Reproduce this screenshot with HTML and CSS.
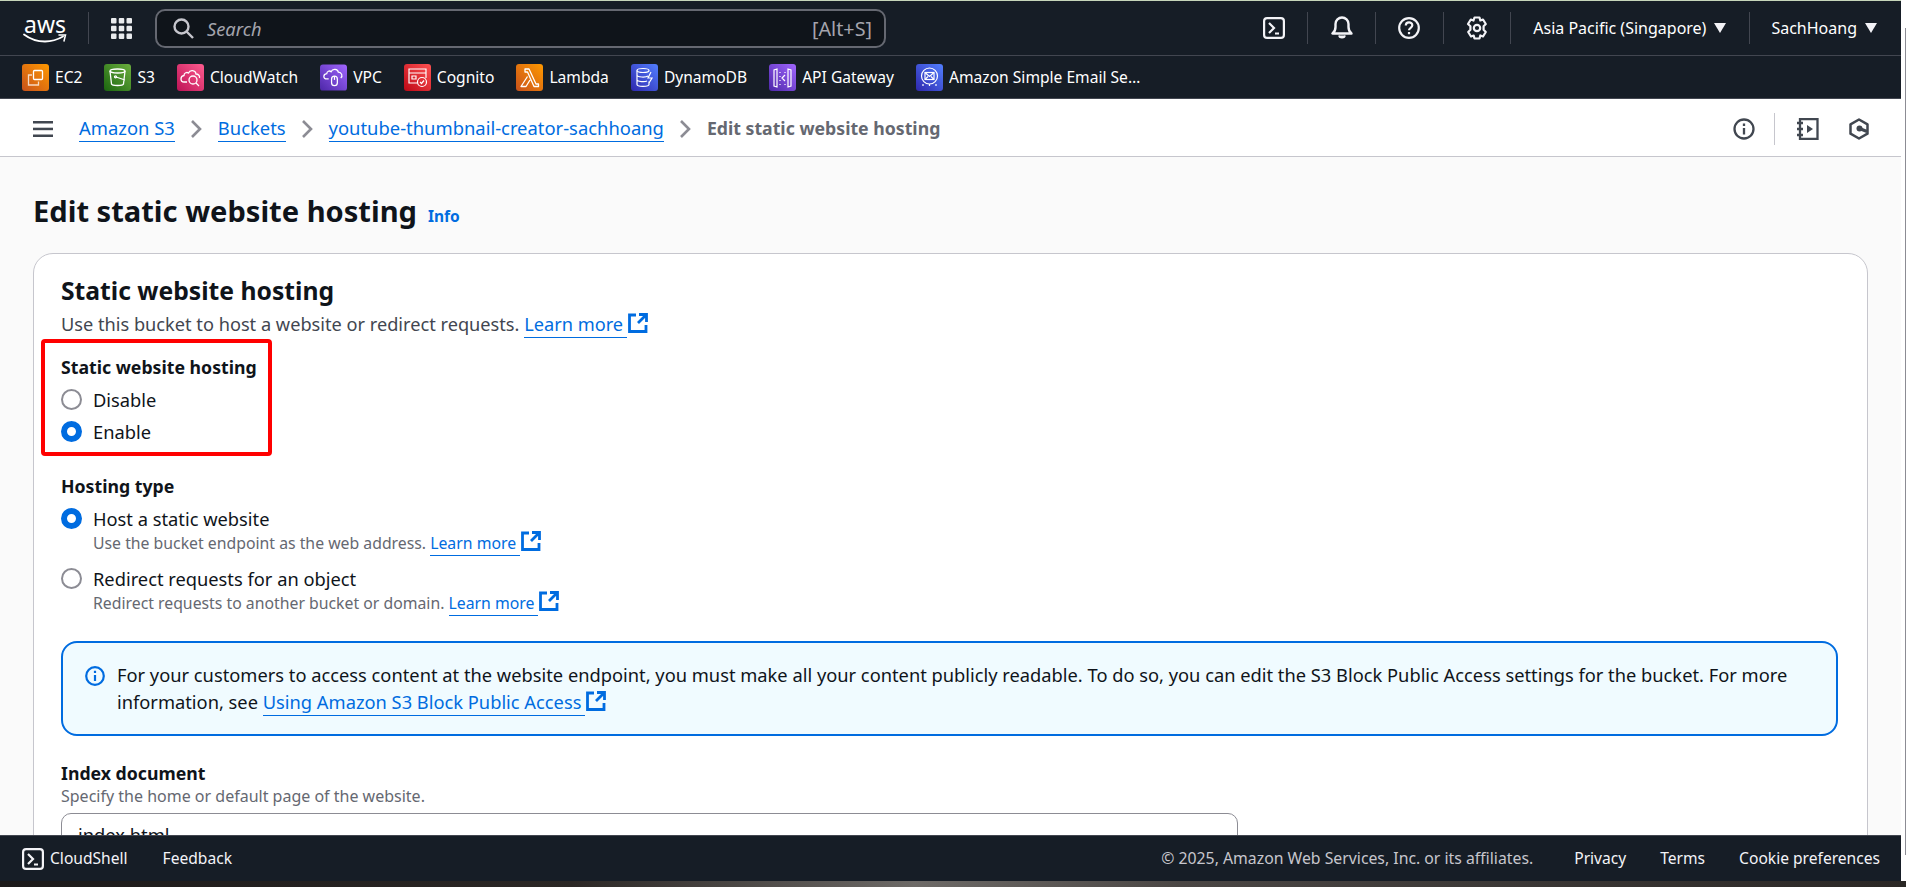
FILE: index.html
```html
<!DOCTYPE html>
<html lang="en">
<head>
  <meta charset="UTF-8" />
  <meta name="viewport" content="width=device-width, initial-scale=1.0"/>
  <title>Edit static website hosting</title>
  <link rel="stylesheet" href="styles.css">
</head>
<body>

  <div class="window">
    <div class="app">

      <!-- Top navigation -->
      <header class="topnav">
        <div class="logo">
          <span class="logo-text">aws</span>
          <svg class="logo-smile" width="44" height="11" viewBox="0 0 44 11" fill="none" stroke="#fff" stroke-linecap="round">
            <path d="M1 1.5c6 4.500 13 7 21 7 6 0 12-1.500 18-5" stroke-width="1.800"/>
            <path d="M36 2h6.500l-1.500 6" stroke-width="1.500"/>
          </svg>
        </div>
        <span class="nav-div logo-div"></span>
        <svg class="grid-icon" width="21" height="21" viewBox="0 0 21 21" fill="#e9ebed">
          <rect x="0" y="0" width="5.500" height="5.500" rx="1"/><rect x="7.750" y="0" width="5.500" height="5.500" rx="1"/><rect x="15.500" y="0" width="5.500" height="5.500" rx="1"/>
          <rect x="0" y="7.750" width="5.500" height="5.500" rx="1"/><rect x="7.750" y="7.750" width="5.500" height="5.500" rx="1"/><rect x="15.500" y="7.750" width="5.500" height="5.500" rx="1"/>
          <rect x="0" y="15.500" width="5.500" height="5.500" rx="1"/><rect x="7.750" y="15.500" width="5.500" height="5.500" rx="1"/><rect x="15.500" y="15.500" width="5.500" height="5.500" rx="1"/>
        </svg>
        <div class="search">
          <svg width="21" height="21" viewBox="0 0 21 21" fill="none" stroke="#c6c6cd" stroke-width="2.400">
            <circle cx="8.500" cy="8.500" r="7"/><path d="M13.500 13.500l6.500 6.500"/>
          </svg>
          <span class="search-text">Search</span>
          <span class="search-key">[Alt+S]</span>
        </div>
        <div class="nav-right">
          <svg class="nav-icon first" width="22" height="22" viewBox="0 0 22 22" fill="none" stroke="#f3f3f7" stroke-width="2.200">
            <rect x="1.100" y="1.100" width="19.800" height="19.800" rx="3"/><path d="M6 6l5 5-5 5M12 16.500h4"/>
          </svg>
          <span class="nav-div"></span>
          <svg class="nav-icon" width="22" height="24" viewBox="0 0 22 24" fill="none" stroke="#f3f3f7" stroke-width="2.400">
            <path d="M1.500 17.500h19c-2.500-2-3-3.500-3-6.500v-3c0-3.500-3-6.500-6.500-6.500S4.500 4.500 4.500 8v3c0 3-.5 4.500-3 6.500z" stroke-linejoin="round"/>
            <path d="M8 19.500c0 3 6 3 6 0" fill="#f3f3f7" stroke-width="1.500"/>
          </svg>
          <span class="nav-div"></span>
          <svg class="nav-icon" width="22" height="22" viewBox="0 0 22 22" fill="none" stroke="#f3f3f7" stroke-width="2.200">
            <circle cx="11" cy="11" r="9.800"/><path d="M7.800 8.500c0-4.200 6.500-4.200 6.500-.2 0 2.500-3.300 2.500-3.300 5"/><path d="M11 15v2.200"/>
          </svg>
          <span class="nav-div"></span>
          <svg class="nav-icon" width="22" height="24" viewBox="0 0 22 24" fill="none" stroke="#f3f3f7" stroke-width="2.200" stroke-linejoin="round">
            <path d="M8.500 1.500h5l.8 3 2.700-1 2.800 4.500-2.200 2.200v3.600l2.200 2.200-2.800 4.500-2.700-1-.8 3h-5l-.8-3-2.700 1-2.800-4.500 2.200-2.200v-3.600L2 8l2.800-4.500 2.700 1z"/>
            <circle cx="11" cy="12" r="3.200"/>
          </svg>
          <span class="nav-div"></span>
          <span class="nav-menu region">Asia Pacific (Singapore)<i class="caret"></i></span>
          <span class="nav-div"></span>
          <span class="nav-menu user">SachHoang<i class="caret"></i></span>
        </div>
      </header>

      <!-- Pinned services -->
      <nav class="services">
        <a class="service">
          <svg class="svc" viewBox="0 0 27 27" fill="none" stroke="#fff" stroke-width="1.300">
            <defs><linearGradient id="gOrange" x1="0" y1="1" x2="1" y2="0"><stop offset="0" stop-color="#c8511b"/><stop offset="1" stop-color="#f90"/></linearGradient></defs>
            <rect width="27" height="27" rx="3" fill="url(#gOrange)" stroke="none"/>
            <rect x="11.500" y="6.500" width="9" height="9" rx="1"/><path d="M10 11H6.500v10h10v-3.500" stroke-opacity=".75"/>
          </svg>
          <span>EC2</span>
        </a>
        <a class="service">
          <svg class="svc" viewBox="0 0 27 27" fill="none" stroke="#fff" stroke-width="1.300">
            <defs><linearGradient id="gGreen" x1="0" y1="1" x2="1" y2="0"><stop offset="0" stop-color="#1b660f"/><stop offset="1" stop-color="#6cae3e"/></linearGradient></defs>
            <rect width="27" height="27" rx="3" fill="url(#gGreen)" stroke="none"/>
            <ellipse cx="13.500" cy="7" rx="7.500" ry="2"/><path d="M6 7l1.500 13c.5 2 11.500 2 12 0L21 7M12 13l9 3"/><circle cx="11.500" cy="12.800" r="1"/>
          </svg>
          <span>S3</span>
        </a>
        <a class="service">
          <svg class="svc" viewBox="0 0 27 27" fill="none" stroke="#fff" stroke-width="1.300">
            <defs><linearGradient id="gPink" x1="0" y1="1" x2="1" y2="0"><stop offset="0" stop-color="#bc1356"/><stop offset="1" stop-color="#ff5c8f"/></linearGradient></defs>
            <rect width="27" height="27" rx="3" fill="url(#gPink)" stroke="none"/>
            <path d="M10 18H7c-4 0-4-6 0-6.500 0-3 3-3.500 4.500-2.500 1.500-3.500 7-3 7.500 1 2.500 0 4 2 3.500 4"/><circle cx="16" cy="16" r="4"/><path d="M19 19l3 3"/>
          </svg>
          <span>CloudWatch</span>
        </a>
        <a class="service">
          <svg class="svc" viewBox="0 0 28 27" fill="none" stroke="#fff" stroke-width="1.300">
            <defs><linearGradient id="gPurple" x1="0" y1="1" x2="1" y2="0"><stop offset="0" stop-color="#4d27a8"/><stop offset="1" stop-color="#a166ff"/></linearGradient></defs>
            <rect width="28" height="27" rx="3" fill="url(#gPurple)" stroke="none"/>
            <path d="M9 15H7c-4 0-4-5 0-5.500 0-2.500 3-3.500 4.500-2 1.500-3.500 7-3 7.500 .5 3.500 0 5 4 2.500 6"/><rect x="12" y="12" width="6" height="10" rx="3"/><path d="M15 12v4"/>
          </svg>
          <span>VPC</span>
        </a>
        <a class="service">
          <svg class="svc" viewBox="0 0 27 27" fill="none" stroke="#fff" stroke-width="1.200">
            <defs><linearGradient id="gRed" x1="0" y1="1" x2="1" y2="0"><stop offset="0" stop-color="#bd0816"/><stop offset="1" stop-color="#ff5252"/></linearGradient></defs>
            <rect width="27" height="27" rx="3" fill="url(#gRed)" stroke="none"/>
            <path d="M13 19H5V5h17v9M5 9h17M8 12h4v3H8z"/><circle cx="18" cy="18" r="4.500"/><path d="M16 18l1.500 1.500 2.500-3"/>
          </svg>
          <span>Cognito</span>
        </a>
        <a class="service">
          <svg class="svc" viewBox="0 0 27 27" fill="none" stroke="#fff" stroke-width="1.300" stroke-linejoin="round">
            <rect width="27" height="27" rx="3" fill="url(#gOrange)" stroke="none"/>
            <path d="M9 5h4l7 15h2.500v2.500H18L11.500 8H9zM11.500 12.500L5 22.500h5l4-6.500"/>
          </svg>
          <span>Lambda</span>
        </a>
        <a class="service">
          <svg class="svc" viewBox="0 0 27 27" fill="none" stroke="#fff" stroke-width="1.200">
            <defs><linearGradient id="gBlue" x1="0" y1="1" x2="1" y2="0"><stop offset="0" stop-color="#2e27ad"/><stop offset="1" stop-color="#527fff"/></linearGradient></defs>
            <rect width="27" height="27" rx="3" fill="url(#gBlue)" stroke="none"/>
            <ellipse cx="12" cy="6.500" rx="6" ry="2"/><path d="M6 6.500v14c0 2.500 12 2.500 12 0v-3M6 11c0 2.500 9 2.500 11 1M6 15.500c0 2.500 8 2.500 10 1.500M20 8l-3 6h4l-3 5"/>
          </svg>
          <span>DynamoDB</span>
        </a>
        <a class="service">
          <svg class="svc" viewBox="0 0 27 27" fill="none" stroke="#fff" stroke-width="1.200">
            <rect width="27" height="27" rx="3" fill="url(#gPurple)" stroke="none"/>
            <path d="M5 6v16l3 1V5zM22 6v16l-3 1V5zM11 8v1M11 12v1M11 16v1M11 20v1M16 8v1M16 20v1M16 11l-3 3 3 3"/>
          </svg>
          <span>API Gateway</span>
        </a>
        <a class="service ses">
          <svg class="svc" viewBox="0 0 27 27" fill="none" stroke="#fff" stroke-width="1.200">
            <rect width="27" height="27" rx="3" fill="url(#gBlue)" stroke="none"/>
            <circle cx="13.500" cy="12" r="8"/><rect x="9" y="8.500" width="9" height="7"/><path d="M9 8.500l4.500 4 4.500-4M9 15.500l3-3M18 15.500l-3-3M7 20v2M13.500 20v2M20 20v2"/>
          </svg>
          <span class="ses-name">Amazon Simple Email Service</span>
        </a>
      </nav>

      <!-- Breadcrumb bar -->
      <div class="crumbbar">
        <svg class="burger" width="20" height="16" viewBox="0 0 20 16" fill="#414750">
          <rect width="20" height="2.500"/><rect y="6.700" width="20" height="2.500"/><rect y="13.500" width="20" height="2.500"/>
        </svg>
        <a class="link crumb">Amazon S3</a>
        <svg class="chev" width="12" height="20" viewBox="0 0 12 20" fill="none" stroke="#8c8c94" stroke-width="2.600"><path d="M2 2l8 8-8 8"/></svg>
        <a class="link crumb">Buckets</a>
        <svg class="chev" width="12" height="20" viewBox="0 0 12 20" fill="none" stroke="#8c8c94" stroke-width="2.600"><path d="M2 2l8 8-8 8"/></svg>
        <a class="link crumb">youtube-thumbnail-creator-sachhoang</a>
        <svg class="chev" width="12" height="20" viewBox="0 0 12 20" fill="none" stroke="#8c8c94" stroke-width="2.600"><path d="M2 2l8 8-8 8"/></svg>
        <span class="crumb-current">Edit static website hosting</span>
        <div class="crumb-tools">
          <svg width="22" height="22" viewBox="0 0 22 22" fill="none" stroke="#414750" stroke-width="2.300">
            <circle cx="11" cy="11" r="9.500"/><path d="M11 10v6.500M11 5.500v2.400"/>
          </svg>
          <span class="tool-div"></span>
          <svg class="tool-book" width="23" height="22" viewBox="0 0 23 22" fill="none" stroke="#414750" stroke-width="2.300">
            <path d="M4 1.200h17.500v19.600H4z"/><path d="M1 5h6M1 11h6M1 17h6"/><path d="M11 7l6 4-6 4z" fill="#414750" stroke="none"/>
          </svg>
          <svg class="tool-hex" width="20" height="22" viewBox="0 0 20 22" fill="none" stroke="#414750" stroke-width="2.500" stroke-linejoin="round">
            <path d="M10 1.500l8.500 4.800v9.400L10 20.500l-8.500-4.800V6.300z"/><circle cx="10.500" cy="10.500" r="3" fill="#414750" stroke="none"/><path d="M10.500 10.500l7.500 3" stroke-width="3"/>
          </svg>
        </div>
      </div>

      <main class="content">
        <div class="page-head">
          <h1>Edit static website hosting</h1>
          <a class="info-link">Info</a>
        </div>

        <section class="card">
          <h2>Static website hosting</h2>
          <p class="card-desc">Use this bucket to host a website or redirect requests. <a class="link">Learn more</a><svg class="ext" viewBox="0 0 20 20" fill="none" stroke="#006ce0" stroke-width="2.800"><path d="M8 2H1.500v16.500H18V12"/><path d="M11 1.500h7.500V9M18 2l-8 8"/></svg></p>

          <div class="field first-field">
            <div class="red-box"></div>
            <div class="field-label">Static website hosting</div>
            <label class="radio"><i class="dot"></i>Disable</label>
            <label class="radio"><i class="dot on"></i>Enable</label>
          </div>

          <div class="field">
            <div class="field-label">Hosting type</div>
            <label class="radio"><i class="dot on"></i>Host a static website</label>
            <p class="radio-desc">Use the bucket endpoint as the web address. <a class="link">Learn more</a><svg class="ext" viewBox="0 0 20 20" fill="none" stroke="#006ce0" stroke-width="2.800"><path d="M8 2H1.500v16.500H18V12"/><path d="M11 1.500h7.500V9M18 2l-8 8"/></svg></p>
            <label class="radio second"><i class="dot"></i>Redirect requests for an object</label>
            <p class="radio-desc">Redirect requests to another bucket or domain. <a class="link">Learn more</a><svg class="ext" viewBox="0 0 20 20" fill="none" stroke="#006ce0" stroke-width="2.800"><path d="M8 2H1.500v16.500H18V12"/><path d="M11 1.500h7.500V9M18 2l-8 8"/></svg></p>
          </div>

          <div class="alert">
            <svg class="alert-icon" width="20" height="20" viewBox="0 0 20 20" fill="none" stroke="#006ce0" stroke-width="2.200">
              <circle cx="10" cy="10" r="8.800"/><path d="M10 9v6M10 4.800v2.200"/>
            </svg>
            <p>For your customers to access content at the website endpoint, you must make all your content publicly readable. To do so, you can edit the S3 Block Public Access settings for the bucket. For more information, see <a class="link">Using Amazon S3 Block Public Access</a><svg class="ext" viewBox="0 0 20 20" fill="none" stroke="#006ce0" stroke-width="2.800"><path d="M8 2H1.500v16.500H18V12"/><path d="M11 1.500h7.500V9M18 2l-8 8"/></svg></p>
          </div>

          <div class="field index-field">
            <div class="field-label">Index document</div>
            <div class="field-hint">Specify the home or default page of the website.</div>
            <input class="text-input" type="text" value="index.html"/>
          </div>
        </section>
      </main>

      <footer class="footer">
        <svg width="22" height="22" viewBox="0 0 22 22" fill="none" stroke="#f3f3f7" stroke-width="2.200">
          <rect x="1.100" y="1.100" width="19.800" height="19.800" rx="3"/><path d="M6 6l5 5-5 5M12 16.500h4"/>
        </svg>
        <a class="foot-shell">CloudShell</a>
        <a class="foot-feedback">Feedback</a>
        <span class="foot-copy">© 2025, Amazon Web Services, Inc. or its affiliates.</span>
        <a class="foot-link">Privacy</a>
        <a class="foot-link">Terms</a>
        <a class="foot-link">Cookie preferences</a>
      </footer>
    </div>
    <div class="edge"></div>
  </div>
  <div class="desktop"></div>

</body>
</html>
```

FILE: styles.css
```css
* {
  box-sizing: border-box;
}

html, body {
  height: 100%;
}

body {
  margin: 0;
  display: flex;
  flex-direction: column;
  overflow: hidden;
  background-color: #fff;
  color: #0f141a;
  font-family: "Noto Sans", "Open Sans", sans-serif;
  font-size: 18.3px;
  line-height: 25px;
}

.window {
  display: flex;
  height: 881px;
}

.app {
  width: 1901px;
  display: flex;
  flex-direction: column;
  border-top: 1px solid #c6d6ba;
}

.edge {
  width: 5px;
  margin-top: 28px;
  margin-bottom: 26px;
  border-right: 1px solid #8c8c94;
}

.desktop {
  flex: 1;
  background: linear-gradient(90deg, #1c1a1a 0, #2b2725 30%, #6d6a67 48%, #4a4644 62%, #2a2725 100%);
}

a {
  cursor: pointer;
}

.link {
  color: #006ce0;
  border-bottom: 1px solid #006ce0;
  padding-bottom: 1px;
}

p .link {
  padding-right: 4px;
}

/* Top navigation */
.topnav {
  height: 55px;
  flex: none;
  display: flex;
  align-items: center;
  background-color: #161d26;
  border-bottom: 1px solid #424650;
}

.logo {
  width: 44px;
  margin-left: 23px;
  position: relative;
  height: 28px;
}

.logo-text {
  display: block;
  color: #fff;
  font-size: 23px;
  line-height: 20px;
  text-align: center;
}

.logo-smile {
  display: block;
  margin-top: -1px;
}

.nav-div {
  width: 1px;
  height: 32px;
  background-color: #424650;
}

.logo-div {
  margin-left: 21px;
}

.grid-icon {
  margin-left: 22px;
}

.search {
  width: 731px;
  height: 39px;
  margin-left: 23px;
  padding: 0 12px 0 16px;
  display: flex;
  align-items: center;
  background-color: #0f141a;
  border: 2px solid #656871;
  border-radius: 10px;
}

.search-text {
  margin-left: 13px;
  color: #a4a4ad;
  font-style: italic;
}

.search-key {
  margin-left: auto;
  color: #a4a4ad;
  font-size: 19.8px;
}

.nav-right {
  margin-left: auto;
  display: flex;
  align-items: center;
  color: #fff;
}

.nav-icon {
  margin: 0 22.33px;
}

.nav-menu {
  display: flex;
  align-items: center;
  font-size: 16px;
  white-space: nowrap;
}

.region {
  margin: 0 23px 0 22px;
}

.user {
  margin: 0 24px 0 21px;
}

.caret {
  width: 0;
  height: 0;
  margin-left: 8px;
  border-left: 6px solid transparent;
  border-right: 6px solid transparent;
  border-top: 10px solid #f3f3f7;
}

/* Pinned services */
.services {
  height: 43px;
  flex: none;
  padding-left: 22px;
  display: flex;
  align-items: center;
  gap: 22px;
  background-color: #161d26;
  border-bottom: 1px solid #424650;
  color: #fff;
  font-size: 15.6px;
}

.service {
  display: flex;
  align-items: center;
  gap: 6px;
  white-space: nowrap;
}

.svc {
  width: 27px;
  height: 27px;
  flex: none;
}

.ses-name {
  width: 197px;
  overflow: hidden;
  text-overflow: ellipsis;
}

/* Breadcrumbs */
.crumbbar {
  height: 58px;
  flex: none;
  padding: 2px 0 0 33px;
  display: flex;
  align-items: center;
  background-color: #fff;
  border-bottom: 1px solid #c6c6cd;
}

.burger {
  margin-right: 26px;
}

.crumb {
  font-size: 18.4px;
}

.chev {
  margin: 0 15.5px;
}

.crumb-current {
  color: #656871;
  font-size: 17.7px;
  font-weight: 700;
}

.crumb-tools {
  margin-left: auto;
  margin-right: 32px;
  display: flex;
  align-items: center;
}

.tool-div {
  width: 1px;
  height: 32px;
  margin: 0 21px 0 19px;
  background-color: #c6c6cd;
}

.tool-hex {
  margin-left: 30px;
}

/* Page content */
.content {
  flex: 1;
  min-height: 0;
  overflow: hidden;
  padding: 35px 33px 0;
  background-color: #fafafa;
}

.page-head {
  display: flex;
  align-items: baseline;
  gap: 11px;
  margin-bottom: 23px;
}

h1 {
  margin: 0;
  font-size: 29.1px;
  line-height: 38px;
  font-weight: 700;
}

.info-link {
  color: #006ce0;
  font-size: 15.5px;
  font-weight: 700;
}

.card {
  padding: 19px 29px 30px 27px;
  background-color: #fff;
  border: 1px solid #c6c6cd;
  border-radius: 20px;
}

h2 {
  margin: 0;
  font-size: 24.7px;
  line-height: 36px;
  font-weight: 700;
}

.card-desc {
  margin: 3px 0 0;
  color: #424650;
  font-size: 18.2px;
}

.ext {
  width: 20px;
  height: 20px;
  margin: -4px 0 -4px 1px;
  vertical-align: 2px;
}

.field {
  margin-top: 30px;
  position: relative;
}

.first-field {
  margin-top: 18px;
}

.index-field {
  margin-top: 25px;
}

.field-label {
  margin-bottom: 7px;
  font-size: 17.7px;
  font-weight: 700;
}

.field-hint {
  margin-top: -7px;
  color: #656871;
  font-size: 16px;
  line-height: 20px;
}

.radio {
  display: flex;
  align-items: center;
  gap: 11px;
  margin-bottom: 7px;
}

.radio.second {
  margin-top: 12px;
  margin-bottom: 0;
}

.dot {
  width: 21px;
  height: 21px;
  flex: none;
  background-color: #fff;
  border: 2px solid #8c8c94;
  border-radius: 50%;
}

.dot.on {
  border: 6px solid #006ce0;
}

.radio-desc {
  margin: -5px 0 0 32px;
  color: #656871;
  font-size: 15.8px;
  line-height: 21px;
}

.radio.second + .radio-desc {
  margin-top: 2px;
}

/* Annotation drawn on the screenshot */
.red-box {
  position: absolute;
  left: -20px;
  top: -16px;
  width: 231px;
  height: 117px;
  border: 4px solid #f00;
  border-radius: 4px;
}

.alert {
  margin-top: 27px;
  padding: 19px 20px 19px 22px;
  display: flex;
  gap: 12px;
  background-color: #f0fbff;
  border: 2px solid #006ce0;
  border-radius: 16px;
  line-height: 26.5px;
}

.alert p {
  margin: 0;
}

.alert-icon {
  flex: none;
  margin-top: 4px;
}

.text-input {
  display: block;
  width: 1177px;
  height: 42px;
  margin-top: 7px;
  padding: 0 16px;
  background-color: #fff;
  border: 1px solid #8c8c94;
  border-radius: 10px;
  color: #0f141a;
  font: inherit;
}

/* Footer */
.footer {
  height: 46px;
  flex: none;
  padding: 0 21px 0 22px;
  display: flex;
  align-items: center;
  background-color: #161d26;
  border-top: 1px solid #424650;
  color: #f3f3f7;
  font-size: 15.6px;
}

.foot-shell {
  margin-left: 6px;
}

.foot-feedback {
  margin-left: 35px;
}

.foot-copy {
  margin-left: auto;
  margin-right: 7px;
  color: #c6c6cd;
  font-size: 15.8px;
}

.foot-link {
  margin-left: 34px;
}
```
